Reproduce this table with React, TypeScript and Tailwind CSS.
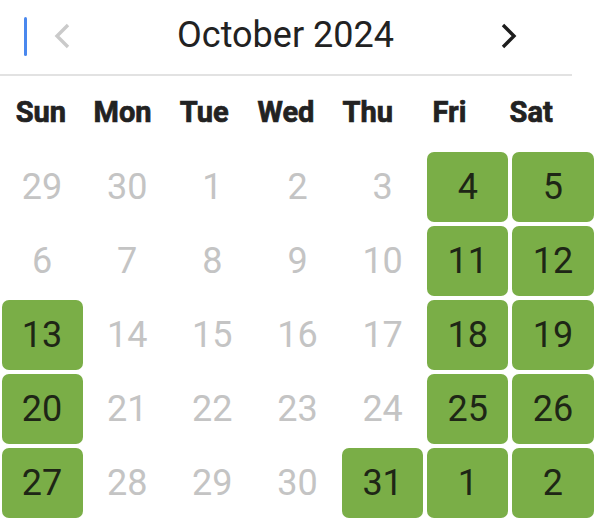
import React from "react";

type Day = { n: number; marked: boolean };

const weekdays = ["Sun", "Mon", "Tue", "Wed", "Thu", "Fri", "Sat"];

// October 2024, with the dates that carry a mark
const rows: [number, boolean][][] = [
  [[29, false], [30, false], [1, false], [2, false], [3, false], [4, true], [5, true]],
  [[6, false], [7, false], [8, false], [9, false], [10, false], [11, true], [12, true]],
  [[13, true], [14, false], [15, false], [16, false], [17, false], [18, true], [19, true]],
  [[20, true], [21, false], [22, false], [23, false], [24, false], [25, true], [26, true]],
  [[27, true], [28, false], [29, false], [30, false], [31, true], [1, true], [2, true]],
];

const days: Day[] = rows.flat().map(([n, marked]) => ({ n, marked }));

function Chevron({ dir }: { dir: "left" | "right" }) {
  return (
    <svg width="18" height="26" viewBox="0 0 18 26" fill="none">
      <path
        d={dir === "left" ? "M15 2 L4 13 L15 24" : "M3 2 L14 13 L3 24"}
        stroke="currentColor"
        strokeWidth="3.4"
      />
    </svg>
  );
}

export default function App() {
  return (
    <div className="w-[596px] h-[520px] bg-white overflow-hidden font-['Roboto','Liberation_Sans',sans-serif] text-[#222]">
      {/* month header */}
      <div className="w-[572px] h-[76px] border-b-2 border-[#e2e2e2] flex items-center pl-[24px] pr-[54px] pb-[2px]">
        <span className="w-[3px] h-[39px] rounded-full bg-[#4a88ee] mt-[1px]" />
        <button className="ml-[26px] text-[#cacaca] flex">
          <Chevron dir="left" />
        </button>
        <div className="flex-1 text-center text-[36px] leading-none pb-[2px]">October 2024</div>
        <button className="text-[#1d1d1d] flex">
          <Chevron dir="right" />
        </button>
      </div>

      {/* weekday labels */}
      <div className="w-[572px] h-[74px] grid grid-cols-7 items-center">
        {weekdays.map((d) => (
          <div
            key={d}
            className="text-center text-[29px] font-bold leading-none pb-[1px] [-webkit-text-stroke:0.7px_#222]"
          >
            {d}
          </div>
        ))}
      </div>

      {/* day grid */}
      <div className="grid grid-cols-7 grid-rows-5 h-[370px]">
        {days.map((d, i) => (
          <div key={i} className="py-[2px] pl-[1.5px] pr-[2.5px]">
            <div
              className={
                "h-full rounded-[7px] flex items-center justify-center text-[36px] leading-none " +
                (d.marked ? "bg-[#7aae47] text-[#1e2616]" : "text-[#c4c4c4]")
              }
            >
              {d.n}
            </div>
          </div>
        ))}
      </div>
    </div>
  );
}
